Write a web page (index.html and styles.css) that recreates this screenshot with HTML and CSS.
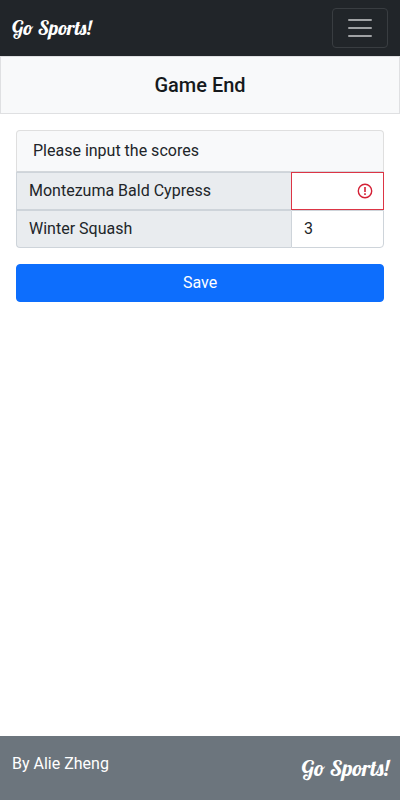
FILE: index.html
```html
<!DOCTYPE html>
<html lang="en">
<head>
<meta charset="utf-8">
<meta name="viewport" content="width=device-width, initial-scale=1">
<title>Go Sports!</title>
<link rel="stylesheet" href="styles.css">
</head>
<body>
<header class="navbar">
  <a class="brand">Go Sports!</a>
  <button class="toggler" aria-label="Menu">
    <svg width="30" height="30" viewBox="0 0 30 30"><path d="M4 7h22M4 15h22M4 23h22" stroke="currentColor" stroke-width="2" stroke-linecap="round" stroke-miterlimit="10"/></svg>
  </button>
</header>
<h1 class="title">Game End</h1>
<main class="content">
  <form class="scores">
    <div class="scores-head">Please input the scores</div>
    <div class="row">
      <label class="team">Montezuma Bald Cypress</label>
      <div class="score invalid">
        <svg width="16" height="16" viewBox="0 0 16 16" fill="none" stroke="#d42035" stroke-width="1.4"><circle cx="8" cy="8" r="6.7"/><path d="M8 4v5M8 10.2v1.7" stroke-width="1.6"/></svg>
      </div>
    </div>
    <div class="row last">
      <label class="team">Winter Squash</label>
      <div class="score">3</div>
    </div>
  </form>
  <button class="save">Save</button>
</main>
<footer class="footer">
  <span>By Alie Zheng</span>
  <span class="brand brand-large">Go Sports!</span>
</footer>
</body>
</html>
```
FILE: styles.css
```css
* { box-sizing: border-box; }
body {
  margin: 0;
  min-height: 100vh;
  display: flex;
  flex-direction: column;
  background: #fff;
  color: #212529;
  font: 16px/24px Roboto, sans-serif;
}
.navbar {
  height: 56px;
  padding: 0 12px;
  display: flex;
  align-items: center;
  justify-content: space-between;
  background: #212529;
}
.brand {
  color: #fff;
  font: 400 20px/30px Lobster, "Liberation Serif", serif;
  white-space: nowrap;
}
.brand-large {
  font-size: 22px;
  line-height: 32px;
}
.toggler {
  width: 56px;
  height: 40px;
  padding: 0;
  display: flex;
  align-items: center;
  justify-content: center;
  border: 1px solid #393d41;
  border-radius: 4px;
  background: none;
  color: #a0a2a4;
}
.title {
  height: 58px;
  margin: 0;
  border: 1px solid #dfe0e2;
  background: #f8f9fa;
  color: #16191c;
  font-size: 20px;
  font-weight: 500;
  line-height: 56px;
  text-align: center;
}
.content {
  flex: 1;
  padding: 16px;
}
.scores-head {
  height: 42px;
  padding: 8px 16px;
  border: 1px solid #dfdfdf;
  border-bottom-color: #d3d7db;
  border-radius: 4px 4px 0 0;
  background: #f8f9fa;
}
.row {
  height: 38px;
  display: flex;
}
.team {
  flex: 1;
  padding: 6px 12px;
  border: 1px solid #ced4da;
  border-right: 0;
  background: #e9ecef;
}
.score {
  width: 93px;
  padding: 6px 12px;
  border: 1px solid #ced4da;
}
.invalid {
  padding: 0 10px;
  display: flex;
  align-items: center;
  justify-content: flex-end;
  border-color: #dc3545;
}
.last .team { border-radius: 0 0 0 4px; }
.last .score { border-radius: 0 0 4px; }
.save {
  display: block;
  width: 100%;
  height: 38px;
  margin-top: 16px;
  padding: 0;
  border: 1px solid #0d6efd;
  border-radius: 4px;
  background: #0d6efd;
  color: #fff;
  font: inherit;
}
.footer {
  height: 64px;
  padding: 16px 11px 14px 12px;
  display: flex;
  justify-content: space-between;
  background: #6c757d;
  color: #fff;
}
```
